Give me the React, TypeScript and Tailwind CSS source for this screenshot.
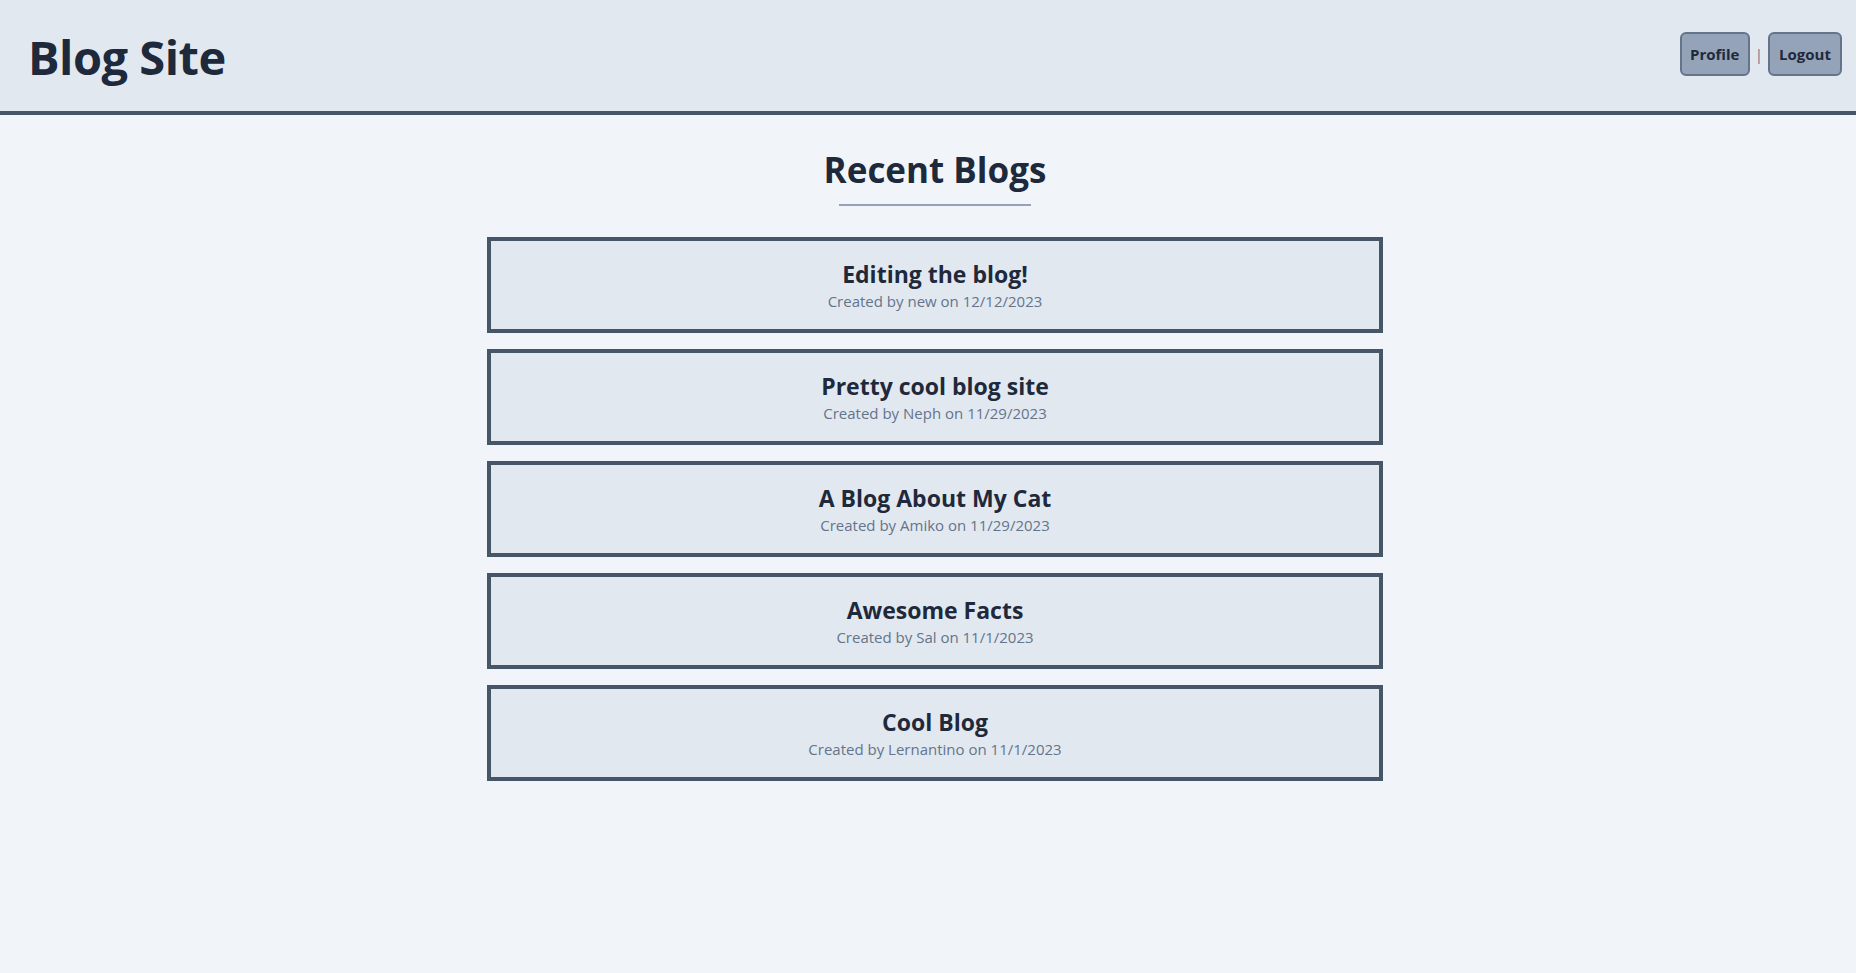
import React from "react"

const blogs = [
  { title: "Editing the blog!", author: "new", date: "12/12/2023" },
  { title: "Pretty cool blog site", author: "Neph", date: "11/29/2023" },
  { title: "A Blog About My Cat", author: "Amiko", date: "11/29/2023" },
  { title: "Awesome Facts", author: "Sal", date: "11/1/2023" },
  { title: "Cool Blog", author: "Lernantino", date: "11/1/2023" },
]

export default function App() {
  return (
    <div className="min-h-screen bg-[#f1f5f9] text-[#1e293b] font-['Open_Sans',sans-serif]">
      {/* Header */}
      <header className="h-[115px] bg-[#e2e8f0] border-b-4 border-[#475569] flex items-center justify-between pl-[28px] pr-[14px]">
        <h1 className="text-[47px] font-bold leading-none tracking-[-0.5px] mt-[4px]">Blog Site</h1>
        <nav className="flex items-center gap-[5px] mb-[3px]">
          <button className="h-[44px] w-[70px] bg-[#94a3b8] border-2 border-[#64748b] rounded-md text-[15px] font-bold">
            Profile
          </button>
          <span className="text-[#64748b] text-[15px]">|</span>
          <button className="h-[44px] w-[74px] bg-[#94a3b8] border-2 border-[#64748b] rounded-md text-[15px] font-bold">
            Logout
          </button>
        </nav>
      </header>

      {/* Blog list */}
      <main className="pl-[14px]">
        <div className="max-w-4xl mx-auto pt-[31px]">
          <div className="flex flex-col items-center">
            <h2 className="text-[35px] font-bold leading-[48px]">Recent Blogs</h2>
            <div className="w-[192px] h-[2px] bg-[#94a3b8] mt-[10px]" />
          </div>

          <div className="mt-[31px] flex flex-col gap-4">
            {blogs.map((blog) => (
              <div
                key={blog.title}
                className="bg-[#e2e8f0] border-4 border-[#475569] pt-[18px] pb-[16px] text-center"
              >
                <h3 className="text-[23px] font-bold leading-[30px]">{blog.title}</h3>
                <p className="text-[15px] leading-6 text-[#64748b]">
                  Created by {blog.author} on {blog.date}
                </p>
              </div>
            ))}
          </div>
        </div>
      </main>
    </div>
  )
}
